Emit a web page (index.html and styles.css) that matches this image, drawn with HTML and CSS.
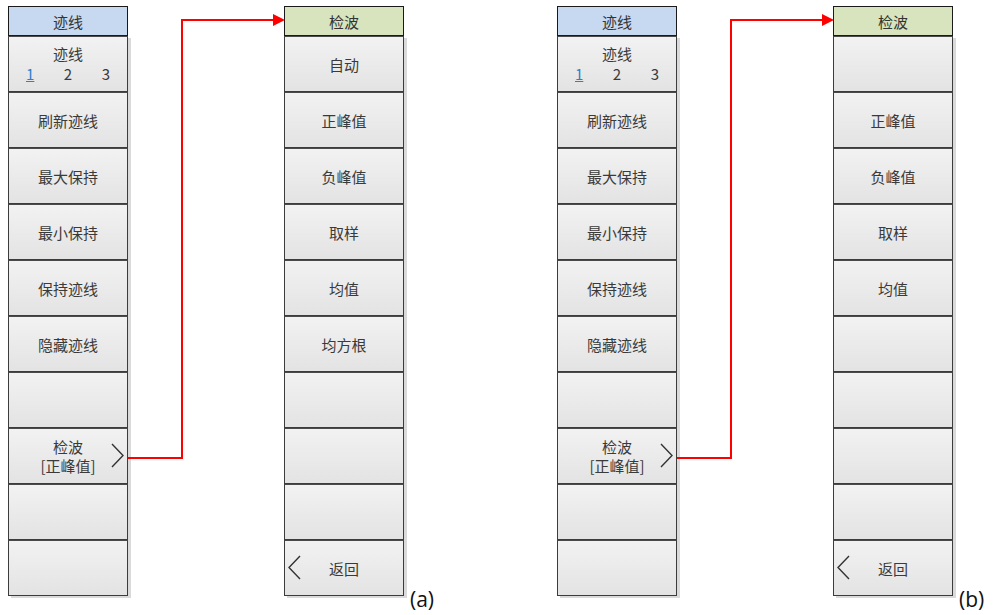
FILE: index.html
```html
<!DOCTYPE html>
<html lang="zh-CN">
<head>
    <meta charset="UTF-8">
    <title>迹线 / 检波</title>
    <link rel="stylesheet" href="styles.css">
</head>
<body>
    <div class="figure">
        <div class="menu">
            <div class="head head-blue">迹线</div>
            <div class="key key-trace">
                <span>迹线</span>
                <span class="nums"><u class="active">1</u><span>2</span><span>3</span></span>
            </div>
            <div class="key">刷新迹线</div>
            <div class="key">最大保持</div>
            <div class="key">最小保持</div>
            <div class="key">保持迹线</div>
            <div class="key">隐藏迹线</div>
            <div class="key"></div>
            <div class="key key-more"><span>检波<br>[正峰值]</span>
                <svg class="chev chev-r" width="13" height="25" viewBox="0 0 13 25"><polyline points="1,1 12,12.5 1,24" fill="none" stroke="#333" stroke-width="1.4"/></svg>
            </div>
            <div class="key"></div>
            <div class="key"></div>
        </div>
        <div class="menu">
            <div class="head head-green">检波</div>
            <div class="key">自动</div>
            <div class="key">正峰值</div>
            <div class="key">负峰值</div>
            <div class="key">取样</div>
            <div class="key">均值</div>
            <div class="key">均方根</div>
            <div class="key"></div>
            <div class="key"></div>
            <div class="key"></div>
            <div class="key key-back">
                <svg class="chev chev-l" width="13" height="25" viewBox="0 0 13 25"><polyline points="12,1 1,12.5 12,24" fill="none" stroke="#333" stroke-width="1.4"/></svg>
                返回
            </div>
        </div>
        <div class="tag">(a)</div>
        <svg class="link" width="290" height="470" viewBox="0 0 290 470">
            <polyline points="120,452 174,452 174,14 266,14" fill="none" stroke="#ff0000" stroke-width="2"/>
            <polygon points="265,8 277,14 265,20" fill="#ff0000"/>
        </svg>
    </div>

    <div class="figure">
        <div class="menu">
            <div class="head head-blue">迹线</div>
            <div class="key key-trace">
                <span>迹线</span>
                <span class="nums"><u class="active">1</u><span>2</span><span>3</span></span>
            </div>
            <div class="key">刷新迹线</div>
            <div class="key">最大保持</div>
            <div class="key">最小保持</div>
            <div class="key">保持迹线</div>
            <div class="key">隐藏迹线</div>
            <div class="key"></div>
            <div class="key key-more"><span>检波<br>[正峰值]</span>
                <svg class="chev chev-r" width="13" height="25" viewBox="0 0 13 25"><polyline points="1,1 12,12.5 1,24" fill="none" stroke="#333" stroke-width="1.4"/></svg>
            </div>
            <div class="key"></div>
            <div class="key"></div>
        </div>
        <div class="menu">
            <div class="head head-green">检波</div>
            <div class="key"></div>
            <div class="key">正峰值</div>
            <div class="key">负峰值</div>
            <div class="key">取样</div>
            <div class="key">均值</div>
            <div class="key"></div>
            <div class="key"></div>
            <div class="key"></div>
            <div class="key"></div>
            <div class="key key-back">
                <svg class="chev chev-l" width="13" height="25" viewBox="0 0 13 25"><polyline points="12,1 1,12.5 12,24" fill="none" stroke="#333" stroke-width="1.4"/></svg>
                返回
            </div>
        </div>
        <div class="tag">(b)</div>
        <svg class="link" width="290" height="470" viewBox="0 0 290 470">
            <polyline points="120,452 174,452 174,14 266,14" fill="none" stroke="#ff0000" stroke-width="2"/>
            <polygon points="265,8 277,14 265,20" fill="#ff0000"/>
        </svg>
    </div>
</body>
</html>
```

FILE: styles.css
```css
html, body {
    height: 100%;
}
body {
    margin: 0;
    padding: 6px 0 0 8px;
    box-sizing: border-box;
    background: #ffffff;
    font-family: "Noto Sans CJK SC", "Noto Sans", sans-serif;
    color: #3a3a3a;
    display: flex;
    overflow: hidden;
}
.figure {
    position: relative;
    flex: 0 0 549px;
    height: 605px;
    display: flex;
    align-items: flex-start;
}
.figure:last-child {
    flex-basis: auto;
}
.menu {
    width: 120px;
    display: flex;
    flex-direction: column;
}
.menu + .menu {
    margin-left: 156px;
}
.head {
    height: 30px;
    box-sizing: border-box;
    border: 1.5px solid #1a1a1a;
    display: flex;
    align-items: center;
    justify-content: center;
    font-size: 15px;
    color: #333;
}
.head-blue {
    background-color: #c6d9f1;
}
.head-green {
    background-color: #d7e4bd;
}
.key {
    position: relative;
    height: 56px;
    box-sizing: border-box;
    border: 1px solid #3c3c3c;
    border-top-color: #4a4a4a;
    background: linear-gradient(#f2f2f2, #e3e3e3);
    box-shadow: 3px 2px 0 #dadada;
    display: flex;
    align-items: center;
    justify-content: center;
    font-size: 15px;
    text-align: center;
    line-height: 19px;
}
.key-trace {
    flex-direction: column;
    line-height: 20px;
}
.nums {
    width: 84px;
    display: flex;
    justify-content: space-between;
    font-size: 15px;
}
.nums .active {
    color: #2f7fc9;
    text-decoration: underline;
}
.chev {
    position: absolute;
    top: 14px;
}
.chev-r {
    right: 3px;
}
.chev-l {
    left: 3px;
}
.tag {
    align-self: flex-end;
    margin-left: 6px;
    font-family: "Open Sans", "Noto Sans", sans-serif;
    font-size: 21px;
    line-height: 24px;
    color: #111;
}
.link {
    position: absolute;
    left: 0;
    top: 0;
    pointer-events: none;
}
```
